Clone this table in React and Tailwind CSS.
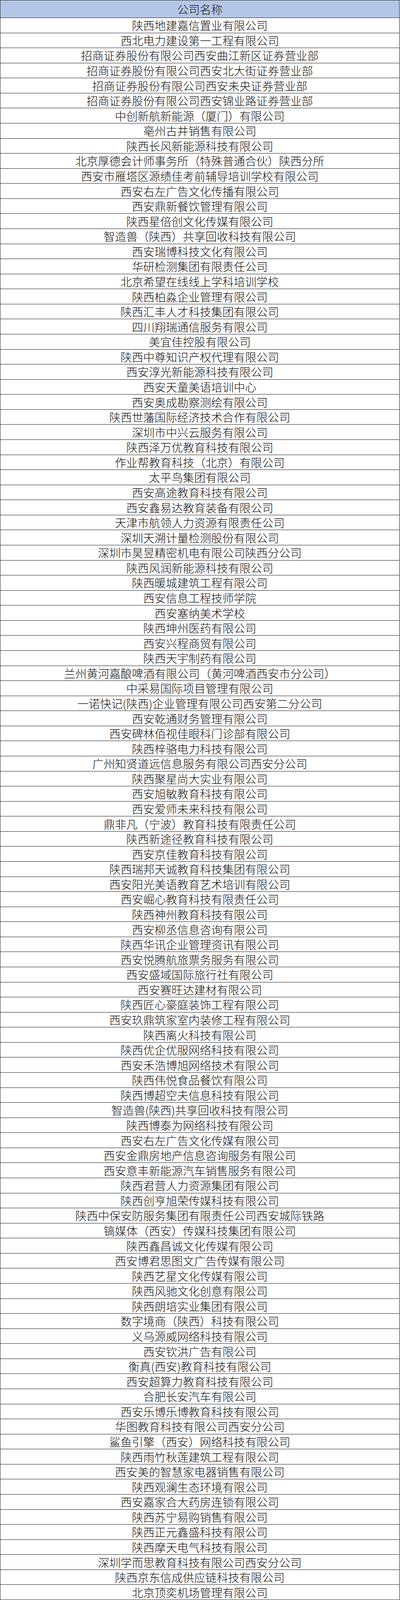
import React from 'react';

const companies = [
    '陕西地建嘉信置业有限公司',
    '西北电力建设第一工程有限公司',
    '招商证券股份有限公司西安曲江新区证券营业部',
    '招商证券股份有限公司西安北大街证券营业部',
    '招商证券股份有限公司西安未央证券营业部',
    '招商证券股份有限公司西安锦业路证券营业部',
    '中创新航新能源（厦门）有限公司',
    '亳州古井销售有限公司',
    '陕西长风新能源科技有限公司',
    '北京厚德会计师事务所（特殊普通合伙）陕西分所',
    '西安市雁塔区源绩佳考前辅导培训学校有限公司',
    '西安右左广告文化传播有限公司',
    '西安鼎新餐饮管理有限公司',
    '陕西星倍创文化传媒有限公司',
    '智造兽（陕西）共享回收科技有限公司',
    '西安瑞博科技文化有限公司',
    '华研检测集团有限责任公司',
    '北京希望在线线上学科培训学校',
    '陕西柏淼企业管理有限公司',
    '陕西汇丰人才科技集团有限公司',
    '四川翔瑞通信服务有限公司',
    '美宜佳控股有限公司',
    '陕西中尊知识产权代理有限公司',
    '西安淳光新能源科技有限公司',
    '西安天童美语培训中心',
    '西安奥成勘察测绘有限公司',
    '陕西世藩国际经济技术合作有限公司',
    '深圳市中兴云服务有限公司',
    '陕西泽万优教育科技有限公司',
    '作业帮教育科技（北京）有限公司',
    '太平鸟集团有限公司',
    '西安高途教育科技有限公司',
    '西安鑫易达教育装备有限公司',
    '天津市航领人力资源有限责任公司',
    '深圳天溯计量检测股份有限公司',
    '深圳市昊昱精密机电有限公司陕西分公司',
    '陕西风润新能源科技有限公司',
    '陕西暖城建筑工程有限公司',
    '西安信息工程技师学院',
    '西安塞纳美术学校',
    '陕西坤州医药有限公司',
    '西安兴程商贸有限公司',
    '陕西天宇制药有限公司',
    '兰州黄河嘉酿啤酒有限公司（黄河啤酒西安市分公司）',
    '中采易国际项目管理有限公司',
    '一诺快记(陕西)企业管理有限公司西安第二分公司',
    '西安乾通财务管理有限公司',
    '西安碑林佰视佳眼科门诊部有限公司',
    '陕西梓骆电力科技有限公司',
    '广州知贤道远信息服务有限公司西安分公司',
    '陕西聚星尚大实业有限公司',
    '西安旭敏教育科技有限公司',
    '西安爱师未来科技有限公司',
    '鼎非凡（宁波）教育科技有限责任公司',
    '陕西新途径教育科技有限公司',
    '西安京佳教育科技有限公司',
    '陕西瑞邦天诚教育科技集团有限公司',
    '西安阳光美语教育艺术培训有限公司',
    '西安崛心教育科技有限责任公司',
    '陕西神州教育科技有限公司',
    '西安柳丞信息咨询有限公司',
    '陕西华讯企业管理资讯有限公司',
    '西安悦腾航旅票务服务有限公司',
    '西安盛域国际旅行社有限公司',
    '西安赛旺达建材有限公司',
    '陕西匠心豪庭装饰工程有限公司',
    '西安玖鼎筑家室内装修工程有限公司',
    '陕西离火科技有限公司',
    '陕西优企优服网络科技有限公司',
    '西安禾浩博旭网络技术有限公司',
    '陕西伟悦食品餐饮有限公司',
    '陕西博超空夫信息科技有限公司',
    '智造兽(陕西)共享回收科技有限公司',
    '陕西博泰为网络科技有限公司',
    '西安右左广告文化传媒有限公司',
    '西安金鼎房地产信息咨询服务有限公司',
    '西安意丰新能源汽车销售服务有限公司',
    '陕西君营人力资源集团有限公司',
    '陕西创亨旭荣传媒科技有限公司',
    '陕西中保安防服务集团有限责任公司西安城际铁路',
    '镐媒体（西安）传媒科技集团有限公司',
    '陕西鑫昌诚文化传媒有限公司',
    '西安博君思图文广告传媒有限公司',
    '陕西艺星文化传媒有限公司',
    '陕西风驰文化创意有限公司',
    '陕西朗培实业集团有限公司',
    '数字境商（陕西）科技有限公司',
    '义乌源威网络科技有限公司',
    '西安钦洪广告有限公司',
    '衡真(西安)教育科技有限公司',
    '西安超算力教育科技有限公司',
    '合肥长安汽车有限公司',
    '西安乐博乐博教育科技有限公司',
    '华图教育科技有限公司西安分公司',
    '鲨鱼引擎（西安）网络科技有限公司',
    '陕西雨竹秋莲建筑工程有限公司',
    '西安美的智慧家电器销售有限公司',
    '陕西观澜生态环境有限公司',
    '西安嘉家合大药房连锁有限公司',
    '陕西苏宁易购销售有限公司',
    '陕西正元鑫盛科技有限公司',
    '陕西摩天电气科技有限公司',
    '深圳学而思教育科技有限公司西安分公司',
    '陕西京东信成供应链科技有限公司',
    '北京顶奕机场管理有限公司',
];

const App = () => {
    return (
        <div className="w-[1025px] bg-white font-['Noto_Sans_CJK_SC','Noto_Sans',sans-serif] text-[#111]">
            {/* the sheet fills the window: header track 49, each company row 42 */}
            <div className="w-[1024px] h-screen grid grid-rows-[49fr_repeat(105,42fr)] border-l border-r border-t border-[#1a1a1a]">
                <div className="min-h-0 flex items-center justify-center bg-[#b4c6e7] border-b border-[#1a1a1a] text-[29px] leading-none font-light">
                    公司名称
                </div>

                {companies.map((name, i) => (
                    <div
                        key={i}
                        className="min-h-0 flex items-center justify-center border-b border-[#1a1a1a] text-[29px] leading-none font-light whitespace-nowrap"
                    >
                        {name}
                    </div>
                ))}
            </div>
        </div>
    );
};

export default App;
